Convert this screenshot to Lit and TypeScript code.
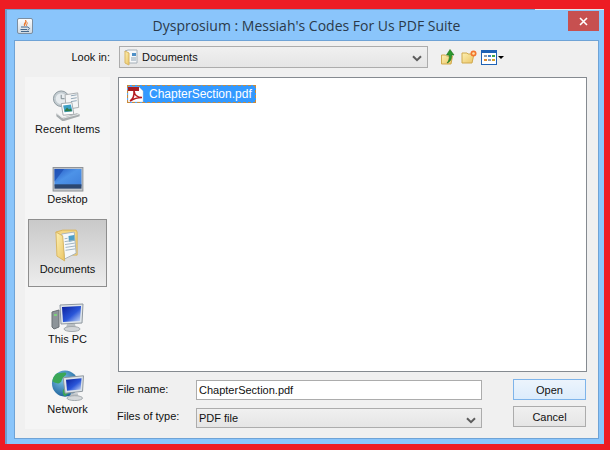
import { LitElement, css, html, svg } from "lit";
import { customElement } from "lit/decorators.js";

const chevron = html`<svg class="chev" width="10" height="7" viewBox="0 0 10 7"><path d="M1 1.2 5 5.2 9 1.2" fill="none" stroke="#5c5c5c" stroke-width="2"/></svg>`;

const defs = svg`
  <defs>
    <linearGradient id="folder" x1="0" y1="0" x2="1" y2="1">
      <stop offset="0" stop-color="#fdf0b4"/><stop offset="1" stop-color="#eac565"/>
    </linearGradient>
    <linearGradient id="screen" x1="0" y1="0" x2="1" y2="1">
      <stop offset="0" stop-color="#2559c4"/><stop offset=".45" stop-color="#4d93e8"/><stop offset="1" stop-color="#3f7fda"/>
    </linearGradient>
    <linearGradient id="pc" x1="0" y1="0" x2="1" y2="1">
      <stop offset="0" stop-color="#0a1f9c"/><stop offset=".55" stop-color="#2a56d8"/><stop offset="1" stop-color="#cfe0f8"/>
    </linearGradient>
    <radialGradient id="globe" cx=".4" cy=".35" r=".7">
      <stop offset="0" stop-color="#7cc4e8"/><stop offset="1" stop-color="#1a5e98"/>
    </radialGradient>
  </defs>`;

const recentIcon = html`<svg width="32" height="33" viewBox="0 0 32 34">
  <circle cx="9" cy="10" r="8" fill="#c3ccd1" stroke="#8b979d"/>
  <circle cx="9" cy="10" r="5.6" fill="#e6ebee"/>
  <path d="M9 6v4h3.500" fill="none" stroke="#7b878d"/>
  <path d="M13 6 26 4l1 15-13 2z" fill="#f4f5f6" stroke="#a9adb0"/>
  <path d="M19 7l6-1M19 10l6-1M19 13l6-1" stroke="#8fa5b5"/>
  <path d="M9 15l11-1 2 12-11 1z" fill="#fff" stroke="#a4a9ad"/>
  <path d="M11 17l8-1 1.500 7-8 1z" fill="#3c9fc4"/>
  <path d="M12 23l3-4 2 2 2-1 1 3z" fill="#2e7a46"/>
  <path d="M4 25 10 30l15-5 3 1v2l-16 5-2 0-6-5z" fill="#a8adaf"/>
  <path d="M4 25l7 5 16-4" fill="none" stroke="#e2e4e5"/>
</svg>`;

const desktopIcon = html`<svg width="32" height="25" viewBox="0 0 32 26">
  <rect x=".5" y=".5" width="31" height="24.500" fill="#c3c6ca" stroke="#8d9196"/>
  <rect x="2" y="2" width="28" height="18" fill="url(#screen)"/>
  <rect x="2" y="18" width="28" height="4.500" fill="#2c4770"/>
  <path d="M2 2h10L2 15z" fill="#1d4db0" opacity=".7"/>
</svg>`;

const documentsIcon = html`<svg width="25" height="33" viewBox="0 0 26 34">
  <path d="M1 3 8 1h14l1 2v24H8z" fill="#f4d681" stroke="#d8b45e"/>
  <path d="M7 5 20 3 22 25 10 31z" fill="#f5f8fa" stroke="#aab4ba"/>
  <path d="M14 7l6-1 .5 6-6 1z" fill="#4e9fc7"/>
  <path d="M10 10l3-.5M10 13l10-1.500M10.500 16l10-1.500M11 19l10-1.500M11 22l10-1.500" stroke="#9db2c0"/>
  <path d="M1 3 8 7 10 33 2 28z" fill="url(#folder)" stroke="#d9b662"/>
</svg>`;

const pcIcon = html`<svg width="33" height="29" viewBox="0 0 33 29">
  <path d="M1 9l7-2v17l-5 2-2-2z" fill="#8d9499" stroke="#6a7075"/>
  <path d="M3 11h3v2H3z" fill="#7ed07a"/>
  <path d="M9 2 32 1l-1 19-21 1z" fill="#dfe5ea" stroke="#8f989f"/>
  <path d="M11 4 30 3l-1 15-17 1z" fill="url(#pc)"/>
  <path d="M16 21h8l1 4h-10z" fill="#b9bfc3"/>
  <ellipse cx="21" cy="26" rx="8" ry="2.500" fill="#d1d5d8" stroke="#a3a9ad"/>
</svg>`;

const networkIcon = html`<svg width="33" height="33" viewBox="0 0 33 34">
  <circle cx="14" cy="15" r="13.500" fill="url(#globe)"/>
  <path d="M6 4c3 1 6-1 9 0 1 2-2 3-3 5-2 2-1 4-3 5-2 2-6 0-8-1C1 9 3 6 6 4zM12 21c3-1 6 0 6 3-1 2-3 3-4 4-2 0-3-5-2-7z" fill="#3aa757"/>
  <path d="M12 9 33 7l-1 16-18 2z" fill="#dce3e9" stroke="#8d969d"/>
  <path d="M15 11 31 9.500 30 21l-14 1.500z" fill="url(#pc)"/>
  <path d="M20 25h7l1 4h-9z" fill="#bfc4c8"/>
  <ellipse cx="24" cy="30" rx="8" ry="2.500" fill="#d5d8da" stroke="#a3a9ad"/>
</svg>`;

const places = [
  { name: "Recent Items", icon: recentIcon },
  { name: "Desktop", icon: desktopIcon },
  { name: "Documents", icon: documentsIcon, active: true },
  { name: "This PC", icon: pcIcon },
  { name: "Network", icon: networkIcon },
];

@customElement("app-root")
export class AppRoot extends LitElement {
  static styles = css`
    :host {
      display: flex;
      box-sizing: border-box;
      width: 610px;
      height: 450px;
      padding: 9px 6px 6px 5px;
      background: #ed1c24;
      font-family: "Liberation Sans", Arial, sans-serif;
      font-size: 11px;
      color: #111;
    }
    .window {
      flex: 1;
      display: flex;
      flex-direction: column;
      background: #8ac5fb;
      border-left: 2px solid #6f9dcb;
      padding-right: 5px;
      padding-bottom: 5px;
    }
    .edge {
      height: 1px;
      margin-right: -5px;
      background: linear-gradient(to right, #6f9dcb 528px, #dfe8f0 528px);
    }
    .titlebar {
      height: 30px;
      display: flex;
      align-items: flex-start;
      position: relative;
    }
    .app-icon {
      width: 16px;
      height: 16px;
      margin: 8px 0 0 10px;
      box-sizing: border-box;
      border: 1px solid #7c8ea0;
      border-radius: 2px;
      background: linear-gradient(#fbfcfd, #cfd9e2);
    }
    .app-icon svg {
      display: block;
    }
    .title {
      position: absolute;
      left: 0;
      right: 0;
      top: 6px;
      text-align: center;
      font-family: "Open Sans", sans-serif;
      font-size: 14px;
      line-height: 20px;
      color: #2b3a4a;
      padding-left: 7px;
    }
    .close {
      position: absolute;
      right: 0;
      top: 1px;
      width: 31px;
      height: 20px;
      background: #c75050;
      display: flex;
      align-items: center;
      justify-content: center;
    }
    .panel {
      flex: 1;
      margin-left: 7px;
      border: 1px solid #6fa3d6;
      background: #f0f0f0;
      padding: 5px 11px 9px 10px;
      display: flex;
      flex-direction: column;
      gap: 9px;
    }
    .top {
      display: flex;
      align-items: center;
      height: 22px;
    }
    .look {
      width: 85px;
      text-align: right;
      margin-right: 9px;
    }
    .combo {
      box-sizing: border-box;
      border: 1px solid #acacac;
      background: linear-gradient(#f0f0f0, #e5e5e5);
      display: flex;
      align-items: center;
      position: relative;
    }
    .combo .chev {
      position: absolute;
      right: 5px;
      top: 8px;
    }
    .look-combo {
      width: 309px;
      height: 22px;
      margin-right: 13px;
      padding-left: 4px;
      gap: 4px;
    }
    .tools {
      display: flex;
      align-items: center;
    }
    .body {
      flex: 1;
      display: flex;
      gap: 8px;
    }
    .sidebar {
      width: 85px;
      box-sizing: border-box;
      background: #f5f5f5;
      padding: 2px 3px 0;
      display: flex;
      flex-direction: column;
      gap: 2px;
    }
    .place {
      height: 68px;
      box-sizing: border-box;
      display: flex;
      flex-direction: column;
      align-items: center;
      justify-content: flex-end;
      padding-bottom: 10px;
      line-height: 15px;
      text-align: center;
    }
    .place svg {
      display: block;
    }
    .place.active {
      border: 1px solid #8e8e8e;
      background: linear-gradient(#c9c9c9, #ededed);
      padding-bottom: 9px;
    }
    .main {
      flex: 1;
      display: flex;
      flex-direction: column;
    }
    .list {
      height: 295px;
      box-sizing: border-box;
      border: 1px solid #858a90;
      background: #fff;
      padding: 7px 8px;
      margin-bottom: 7px;
    }
    .file {
      display: inline-flex;
      align-items: center;
      gap: 5px;
      height: 18px;
      box-sizing: border-box;
      padding: 0 4px 0 0;
      background: #3399ff;
      outline: 1px dashed #c98a3a;
      outline-offset: -1px;
      color: #fff;
      font-size: 12px;
    }
    .form {
      display: grid;
      grid-template-columns: 78px 286px 1fr;
      grid-template-rows: 21px 21px;
      row-gap: 6px;
      align-items: center;
    }
    .form label {
      margin: -2px 0 0 -1px;
    }
    .input {
      box-sizing: border-box;
      height: 20px;
      border: 1px solid #acacac;
      background: #fff;
      padding-left: 2px;
      display: flex;
      align-items: center;
      align-self: end;
    }
    .type-combo {
      height: 20px;
      padding-left: 2px;
      align-self: start;
      margin-top: 2px;
    }
    .btn {
      justify-self: end;
      width: 73px;
      height: 21px;
      margin-right: 1px;
      box-sizing: border-box;
      border: 1px solid #acacac;
      background: linear-gradient(#f0f0f0, #e5e5e5);
      display: flex;
      align-items: center;
      justify-content: center;
    }
    .btn.primary {
      border-color: #7eb4ea;
      background: linear-gradient(#ecf4fc, #dcecfc);
    }
  `;

  render() {
    return html`
      <svg width="0" height="0" style="position:absolute">${defs}</svg>
      <div class="window">
        <div class="edge"></div>
        <div class="titlebar">
          <div class="app-icon">
            <svg width="14" height="14" viewBox="0 0 14 14">
              <path d="M7.500 1c1.500 2-2.500 3-1 6 0-2 3-3 1-6zM9.500 3.500c0 1.500-1.500 2-1 3.500" fill="#e8762c" stroke="#e8762c" stroke-width=".8"/>
              <path d="M3 8h7M10 8.500c2 0 2 2-.5 2.500M2.500 10.500h6.500M3 12.500h8" fill="none" stroke="#44688c"/>
            </svg>
          </div>
          <div class="title">Dysprosium : Messiah's Codes For Us PDF Suite</div>
          <div class="close">
            <svg width="9" height="9" viewBox="0 0 9 9"><path d="M1 1l7 7M8 1 1 8" stroke="#fff" stroke-width="1.600"/></svg>
          </div>
        </div>
        <div class="panel">
          <div class="top">
            <div class="look">Look in:</div>
            <div class="combo look-combo">
              <svg width="14" height="17" viewBox="0 0 14 17">
                <path d="M1 2 4 1h9v13H5z" fill="#f6f8fa" stroke="#a6b0b8"/>
                <path d="M8 4h4v3H8z" fill="#4e8fc7"/>
                <path d="M7 9h5M7 11h5" stroke="#8fa3b3"/>
                <path d="M1 2 5 4v12L1 14z" fill="url(#folder)" stroke="#d9b662"/>
              </svg>
              <span>Documents</span>
              ${chevron}
            </div>
            <div class="tools">
              <svg width="14" height="16" viewBox="0 0 14 16">
                <path d="M.5 6h4l1 1h6L10 15H.500z" fill="url(#folder)" stroke="#d0a94f"/>
                <path d="M6 14c1-1 3-4 2-8H5.500L9 .5 13 6h-2.500c.5 4-1.500 7-4.500 8z" fill="#2c9a2c" stroke="#1d6d1d" stroke-width=".6"/>
              </svg>
              <svg style="margin-left:6px" width="16" height="14" viewBox="0 0 16 14">
                <path d="M1 3h5l1 1h6l-2 9H1z" fill="url(#folder)" stroke="#d0a94f"/>
                <circle cx="12.500" cy="3.500" r="3" fill="#f2762e"/>
                <circle cx="12.500" cy="3.500" r="1.300" fill="#ffe2a8"/>
              </svg>
              <svg style="margin-left:4px" width="16" height="15" viewBox="0 0 16 15">
                <rect x=".5" y=".5" width="15" height="14" fill="#fff" stroke="#1f62b5"/>
                <rect x="0" y="0" width="16" height="3" fill="#1f62b5"/>
                <path d="M3 5h3v2H3z" fill="#8e9db0"/><path d="M7 5h3v2H7z" fill="#3f7fc8"/><path d="M11 5h3v2h-3z" fill="#3fa34a"/>
                <path d="M3 9h3v2H3z" fill="#e08a2e"/><path d="M7 9h3v2H7z" fill="#8e9db0"/><path d="M11 9h3v2h-3z" fill="#d8a02a"/>
              </svg>
              <svg style="margin-left:1px" width="6" height="3" viewBox="0 0 6 3"><path d="M0 0h6L3 3z" fill="#000"/></svg>
            </div>
          </div>
          <div class="body">
            <div class="sidebar">
              ${places.map(
                (p) => html`<div class="place ${p.active ? "active" : ""}">${p.icon}<span>${p.name}</span></div>`
              )}
            </div>
            <div class="main">
              <div class="list">
                <div class="file">
                  <svg width="17" height="17" viewBox="0 0 17 17">
                    <path d="M1 1h11l4 4v11H1z" fill="#fff" stroke="#c9c9c9" stroke-width=".5"/>
                    <path d="M1 1h11v4H1z" fill="#a81d22"/>
                    <path d="M3 15c3-2 4.500-5 4-10 .5 4 3 6.500 8 6.500-4 0-8 1-12 3.500z" fill="none" stroke="#b5181e" stroke-width="1.600"/>
                  </svg>
                  <span>ChapterSection.pdf</span>
                </div>
              </div>
              <div class="form">
                <label>File name:</label>
                <div class="input">ChapterSection.pdf</div>
                <div class="btn primary">Open</div>
                <label>Files of type:</label>
                <div class="combo type-combo"><span>PDF file</span>${chevron}</div>
                <div class="btn">Cancel</div>
              </div>
            </div>
          </div>
        </div>
      </div>
    `;
  }
}
